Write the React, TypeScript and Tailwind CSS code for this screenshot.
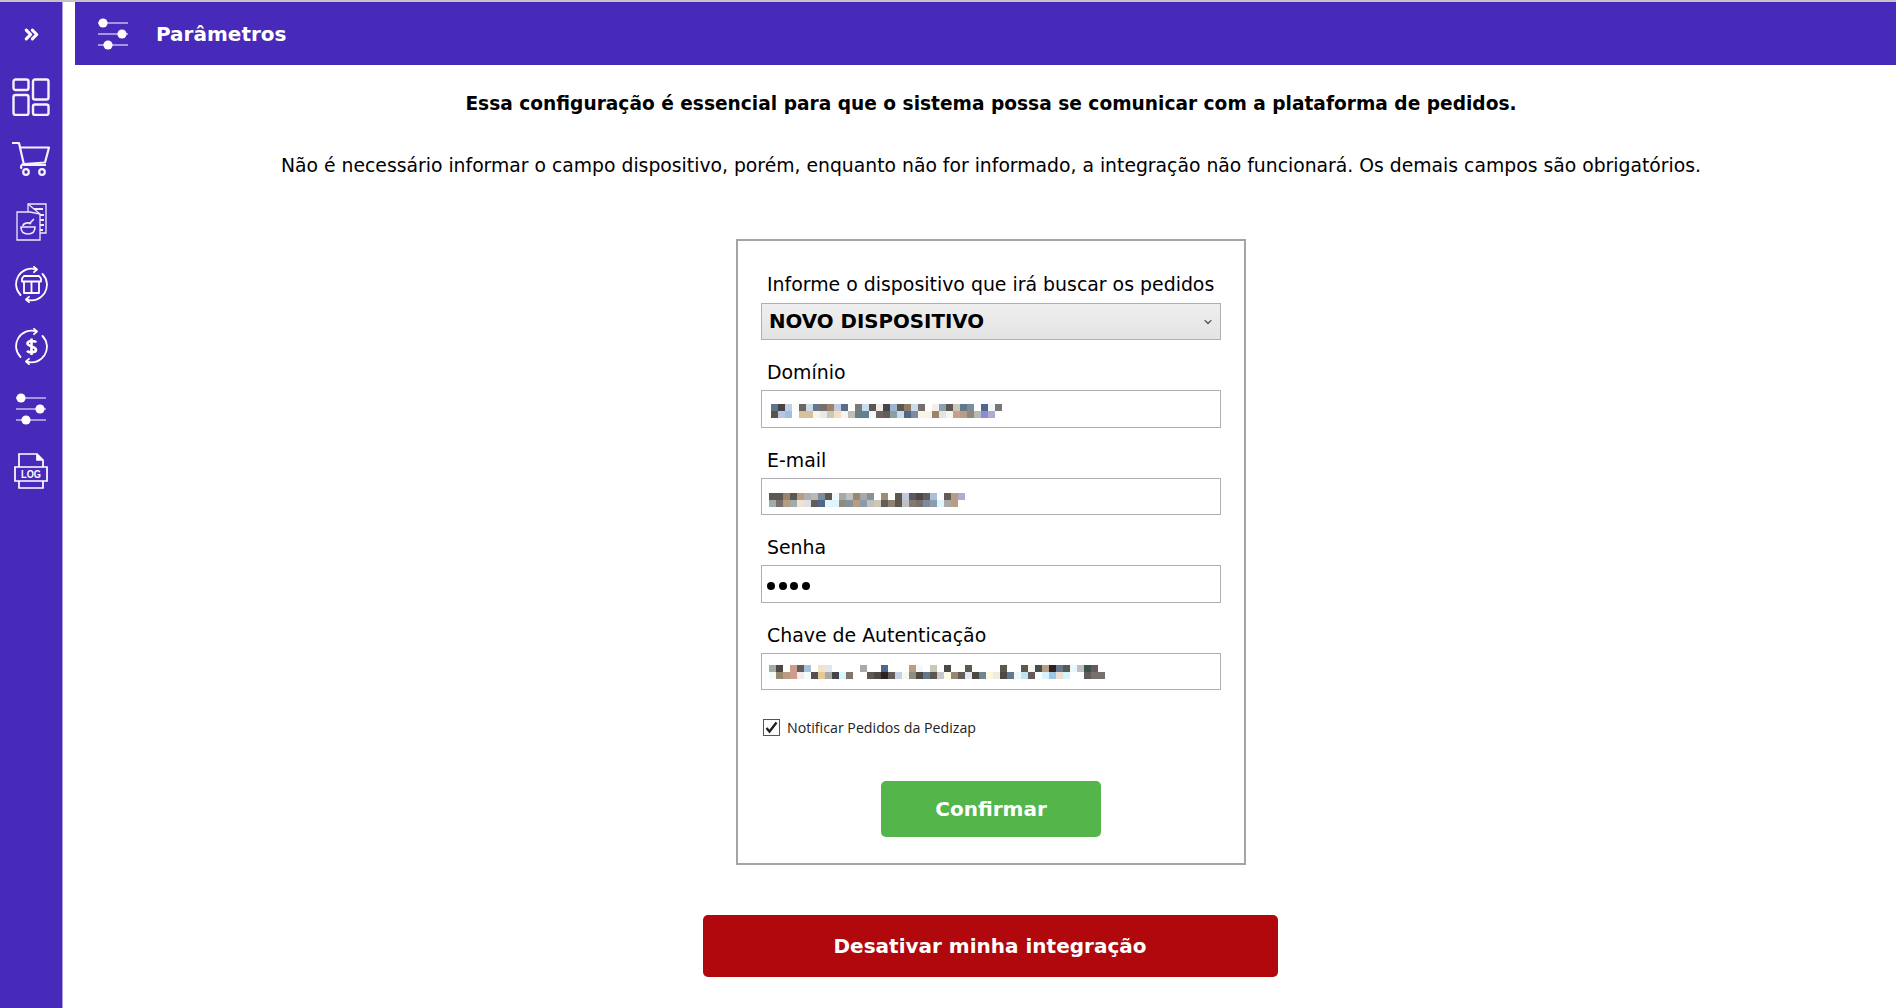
import React from "react";
import { ChevronDown, ChevronsRight } from "lucide-react";

// blurred values in the inputs, each string is a row of mosaic cells
const dominio = [
  ["#5f7488", "#444448", "#c0cce8", "#fdfdf8", "#6e6460", "#c9dcee", "#64788c", "#7a6e68", "#9c8468", "#c0cce4", "#5b6c88", "#fff", "#7a7a7a", "#c8dcec", "#5a5650", "#f0ece4", "#444448", "#9cb4d0", "#5c5850", "#8c7c68", "#c8dcec", "#786c6c", "#fff", "#f4f0e8", "#88a0b0", "#5c5850", "#ccc8b8", "#64788c", "#7c8c9c", "#fff", "#506888", "#f0f8f8", "#777"],
  ["#555550", "#b9c6e2", "#9cc0e0", "#fff", "#d8c09c", "#d8c09c", "#f8f4e8", "#e8e8e8", "#ccc8b8", "#f0e0c0", "#f4f4f0", "#c0bcb8", "#64808c", "#648090", "#f4f8fa", "#6c6460", "#645c58", "#88a0a4", "#c8dcec", "#506888", "#7c8c9c", "#f8f4e8", "#f8f4e8", "#9c8468", "#e4e4e4", "#f4f4f4", "#cc9c8c", "#b89c88", "#908878", "#b8b8b8", "#8c8cd0", "#b0acd0", "#fff"],
];
const email = [
  ["#5c5850", "#5c5850", "#9c8468", "#5c5850", "#b89c84", "#b0b0b0", "#b8b8b8", "#7c8c9c", "#5c5850", "#f0f8f8", "#a8a8a8", "#c0c0c0", "#988870", "#a8a8a8", "#84949c", "#fff", "#a08c70", "#fff", "#5c5850", "#c0c8e0", "#5c5860", "#4c4844", "#645c58", "#a8c0dc", "#fff", "#645c58", "#b89c84", "#b0acd0"],
  ["#a0aca8", "#78706c", "#b89c84", "#a0aca8", "#f0e4d0", "#e0e0e0", "#645c58", "#506888", "#e0f4fc", "#e0f4fc", "#908c80", "#84949c", "#b89c84", "#8c9cac", "#c0c0c0", "#ccc8b8", "#645c58", "#908070", "#5c5850", "#c0c0c0", "#847870", "#78706c", "#7c8c9c", "#8c9cac", "#e0f4fc", "#a8a8a8", "#b89c84", "#fff"],
];
const chave = [
  ["#a0aca8", "#4c4844", "#fff", "#cc9c8c", "#645c58", "#a8c0dc", "#fff", "#f0e4c8", "#e4e4f0", "#fff", "#fff", "#fff", "#fff", "#a8a8b0", "#fff", "#fff", "#506888", "#fff", "#fff", "#fff", "#b89c84", "#f4f8fc", "#fff", "#c8c8b8", "#fff", "#4c4844", "#fff", "#fff", "#5c5850", "#fff", "#fff", "#fff", "#fff", "#5c5850", "#fff", "#fff", "#5c5850", "#f8f8f0", "#40504c", "#b89c84", "#302020", "#64788c", "#5c5850", "#e8f8fc", "#c0c0c0", "#40504c", "#645c58", "#fff"],
  ["#f4fcfc", "#988870", "#b89c84", "#cc9c8c", "#f0ece8", "#f4fcfc", "#555050", "#e4c898", "#a8a8a8", "#444448", "#d8f4fc", "#807470", "#fff", "#fff", "#5c5850", "#4c4844", "#302020", "#645c58", "#c8d0e4", "#f8f8f0", "#908c80", "#4c4844", "#64788c", "#5c5850", "#c8c8c8", "#fcfce8", "#988870", "#645c58", "#e4e8ec", "#4c4844", "#708494", "#fcf8e0", "#f0ece0", "#4c4844", "#64788c", "#eef6fa", "#c0e4f0", "#645c58", "#fff", "#d8f4fc", "#a0c4e4", "#e8e0d4", "#d8f4fc", "#fff", "#fff", "#645c58", "#78706c", "#78706c"],
];

function Mosaic({ rows, cell = 7, className }: { rows: string[][]; cell?: number; className?: string }) {
  return (
    <svg width={rows[0].length * cell} height={rows.length * cell} className={"block " + className} shapeRendering="crispEdges">
      {rows.map((row, y) =>
        row.map((c, x) => <rect key={x + "-" + y} x={x * cell} y={y * cell} width={cell} height={cell} fill={c} />)
      )}
    </svg>
  );
}

function Sliders({ size }: { size: number }) {
  return (
    <svg width={size} height={size} viewBox="0 0 32 32" fill="none" stroke="#fff" strokeWidth="1.2">
      <path d="M1 5h30M1 16h30M1 27h30" />
      <circle cx="6" cy="5" r="4.6" fill="#fff" stroke="none" />
      <circle cx="25" cy="16" r="4.6" fill="#fff" stroke="none" />
      <circle cx="11" cy="27" r="4.6" fill="#fff" stroke="none" />
    </svg>
  );
}

function Cycle({ children }: { children: React.ReactNode }) {
  return (
    <svg width="33" height="37" viewBox="0 0 33 37" fill="none" stroke="#fff" strokeWidth="1.800" strokeLinecap="round" strokeLinejoin="round">
      <path d="M21 3.300A15.500 15.500 0 0 0 5.500 29" />
      <path d="M19 .8l3 2.700L19 6.200" />
      <path d="M12 33.700A15.500 15.500 0 0 0 27.500 8" />
      <path d="M14 36.200l-3-2.700 3-2.700" />
      {children}
    </svg>
  );
}

const sideIcons = [
  <svg width="38" height="38" viewBox="0 0 38 38" fill="none" stroke="#f4f2fc" strokeWidth="2.400">
    <rect x="1.500" y="1.500" width="15" height="10.500" rx="2" />
    <rect x="21" y="1.500" width="15.500" height="20" rx="2" />
    <rect x="1.500" y="17" width="15" height="20" rx="2" />
    <rect x="21" y="26.500" width="15.500" height="10.500" rx="2" />
  </svg>,
  <svg width="38" height="36" viewBox="0 0 38 36" fill="none" stroke="#f4f2fc" strokeWidth="2.200" strokeLinejoin="round">
    <path d="M0 2h7l5 22h22" />
    <path d="M8 6.500h29l-4 15-21 1.500" />
    <path d="M12 23c-3 .5-4 3-2 4.500" />
    <circle cx="14" cy="31" r="2.800" />
    <circle cx="30" cy="31" r="2.800" />
  </svg>,
  <svg width="31" height="38" viewBox="0 0 31 38" fill="none" stroke="#ece9f9" strokeWidth="1.300">
    <path d="M12 9V1h18v29h-6" />
    <path d="M12 1l12 10" />
    <path d="M1 9h13l10 2v26H1z" />
    <path d="M18 6h9M24 12h4M24 17h4M24 22h4M24 27h3" strokeWidth="1.800" />
    <path d="M5 24h14c0 5-3 7-7 7s-7-2-7-7z" strokeWidth="1.600" />
    <path d="M7 23c0-3 6-4 8-2M13 21l5-5" strokeWidth="1.600" />
  </svg>,
  <Cycle>
    <path d="M9 10h15l2 2.500v3H7v-3zM9 15.500V27h15V15.500M16.500 15.500V27" />
  </Cycle>,
  <Cycle>
    <path d="M21 14.500c-1-2-8-2.200-8.500.8-.6 3.500 9 2.700 8.500 6.700-.4 2.800-7 3-9 .8M16.500 10.500v16.500" strokeWidth="2.600" strokeLinecap="butt" />
  </Cycle>,
  <Sliders size={32} />,
  <svg width="34" height="36" viewBox="0 0 34 36" fill="none" stroke="#fff" strokeWidth="1.700">
    <path d="M5 14V1h18l6 6v7" />
    <path d="M23 1v6h6" fill="#fff" />
    <path d="M1 14h32v14H1z" />
    <path d="M5 28v7h24v-7" />
    <text x="17" y="25" textAnchor="middle" fill="#fff" stroke="none" fontFamily="'Liberation Sans', sans-serif" fontWeight="700" fontSize="10" textLength="20" lengthAdjust="spacingAndGlyphs">LOG</text>
  </svg>,
];

function Field({ label, children, labelClass }: { label: string; children: React.ReactNode; labelClass: string }) {
  return (
    <div>
      <div className={"pl-[6px] text-[18.900px] leading-[22px] text-black " + labelClass}>{label}</div>
      {children}
    </div>
  );
}

export default function App() {
  return (
    <div className="flex min-h-[1008px] bg-white font-['DejaVu_Sans',sans-serif] border-t-2 border-[#c4c4c8]">
      <aside className="flex w-[63px] shrink-0 flex-col items-center border-r border-[#a99be0] bg-[#482aba]">
        <div className="flex h-[64px] items-center justify-center">
          <ChevronsRight size={21} color="#fff" strokeWidth={3.500} />
        </div>
        {sideIcons.map((icon, i) => (
          <div key={i} className="flex h-[62.300px] w-full items-center justify-center">
            {icon}
          </div>
        ))}
      </aside>

      <main className="flex min-w-0 flex-1 flex-col pl-[12px]">
        <header className="flex h-[63px] items-center bg-[#482aba] pl-[22px] text-white">
          <Sliders size={32} />
          <h1 className="ml-[27px] mt-[1px] text-[20px] font-bold">Parâmetros</h1>
        </header>

        <div className="flex flex-col items-center pl-[11px]">
          <p className="mt-[27px] text-[18.600px] font-bold leading-[24px] text-black">
            Essa configuração é essencial para que o sistema possa se comunicar com a plataforma de pedidos.
          </p>
          <p className="mt-[38px] text-[18.800px] leading-[24px] text-black">
            Não é necessário informar o campo dispositivo, porém, enquanto não for informado, a integração não funcionará. Os demais campos são obrigatórios.
          </p>

          <form className="mt-[61px] flex h-[626px] w-[510px] flex-col border-2 border-[#a4a4a4] px-[23px] pt-[32px]">
            <Field label="Informe o dispositivo que irá buscar os pedidos" labelClass="mb-[8px]">
              <div className="flex h-[37px] items-center justify-between border border-[#b0b0b4] bg-gradient-to-b from-[#efefef] to-[#e3e3e3] pl-[7px] pr-[6px]">
                <span className="text-[19.800px] font-bold text-black">NOVO DISPOSITIVO</span>
                <ChevronDown size={12} color="#555" strokeWidth={2.500} />
              </div>
            </Field>
            <Field label="Domínio" labelClass="mt-[21px] mb-[7px]">
              <div className="flex h-[38px] items-center border border-[#aeaeb4] pl-[9px]">
                <Mosaic rows={dominio} className="mt-[4px]" />
              </div>
            </Field>
            <Field label="E-mail" labelClass="mt-[21px] mb-[7px]">
              <div className="flex h-[37px] items-center border border-[#aeaeb4] pl-[7px]">
                <Mosaic rows={email} className="mt-[7px]" />
              </div>
            </Field>
            <Field label="Senha" labelClass="mt-[21px] mb-[7px]">
              <div className="flex h-[38px] items-center gap-[3.500px] border border-[#aeaeb4] pl-[5px]">
                {[0, 1, 2, 3].map((d) => (
                  <span key={d} className="mt-[4px] h-[8px] w-[8px] rounded-full bg-black" />
                ))}
              </div>
            </Field>
            <Field label="Chave de Autenticação" labelClass="mt-[21px] mb-[7px]">
              <div className="flex h-[37px] items-center border border-[#aeaeb4] pl-[7px]">
                <Mosaic rows={chave} className="mt-[1px]" />
              </div>
            </Field>

            <label className="mt-[27px] flex items-center pl-[2px]">
              <span className="flex h-[17px] w-[17px] items-center justify-center border border-[#555] bg-white">
                <svg width="13" height="13" viewBox="0 0 13 13" fill="none" stroke="#222" strokeWidth="2.400">
                  <path d="M1.500 7l3 3.500L11.500 1.500" />
                </svg>
              </span>
              <span className="ml-[7px] font-['Open_Sans',sans-serif] text-[14.200px] text-[#222]">Notificar Pedidos da Pedizap</span>
            </label>

            <button type="button" className="mx-auto mt-[43px] h-[56px] w-[220px] rounded-[5px] bg-[#54b54a] text-[20px] font-bold text-white">
              Confirmar
            </button>
          </form>

          <button type="button" className="mt-[50px] mr-[2px] h-[62px] w-[575px] rounded-[5px] bg-[#b0080c] text-[20px] font-bold text-white">
            Desativar minha integração
          </button>
        </div>
      </main>
    </div>
  );
}
